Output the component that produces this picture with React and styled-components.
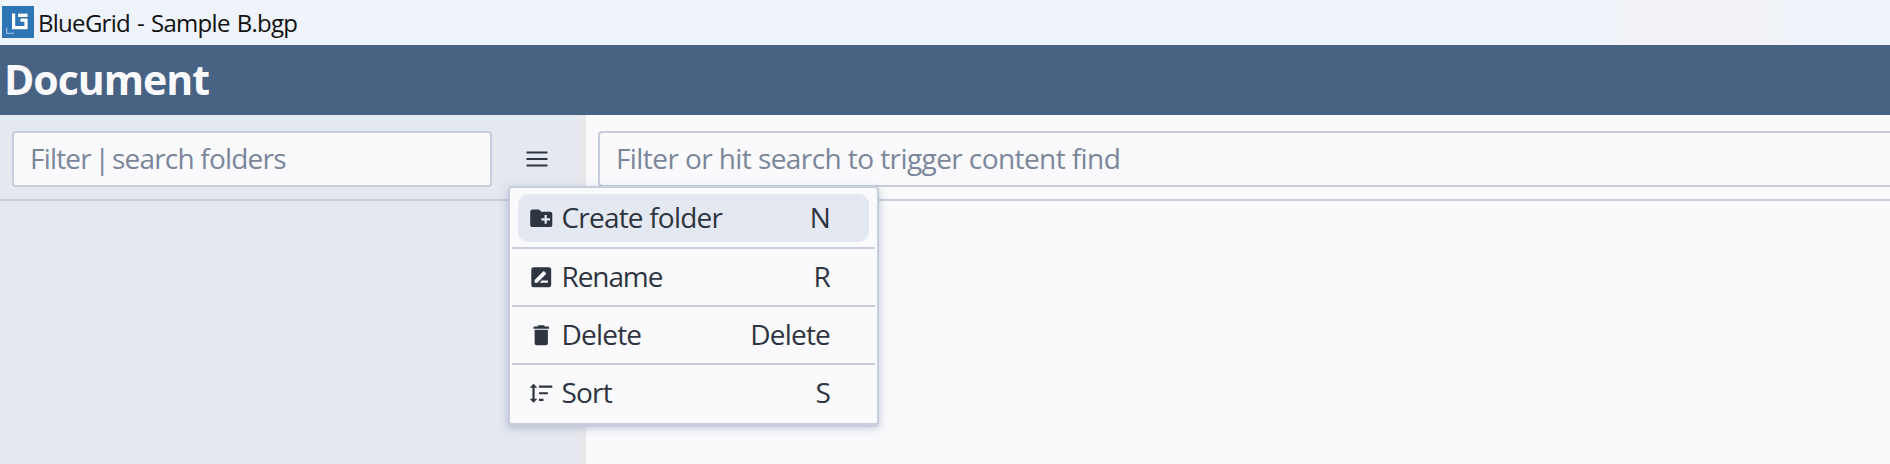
import React from "react";
import styled, { createGlobalStyle } from "styled-components";

const Global = createGlobalStyle`
  * { box-sizing: border-box; }
  body { margin: 0; overflow: hidden; font-family: "Open Sans", "Noto Sans", sans-serif; color: #2e3440; }
`;
const Window = styled.div`
  display: flex;
  flex-direction: column;
  height: 464px;
  background: #fafafc;
`;
const TitleBar = styled.div`
  display: flex;
  align-items: center;
  flex: 0 0 45px;
  padding: 0 0 0 2px;
  gap: 4px;
  background: linear-gradient(90deg, #eff3fb 0 1590px, #f0f2f7 1625px 1765px, #eff3fb 1850px);
  svg { display: block; margin-top: -1px; }
`;
const Fit = styled.span`
  display: inline-block;
  white-space: pre;
  font-size: ${(p) => p.$size}px;
  line-height: 36px;
  letter-spacing: ${(p) => p.$track || 0}px;
  word-spacing: ${(p) => p.$word || 0}px;
  padding-bottom: 2px;
`;
const Pipe = styled.span`
  margin: 0 -3.5px 0 -3px;
`;
const WindowTitle = styled(Fit)`
  color: #111;
  margin-top: 2px;
`;
const Header = styled.header`
  display: flex;
  align-items: center;
  flex: 0 0 70px;
  padding: 0 0 0 4px;
  background: #486284;
  color: #fafafc;
  font-weight: 700;
`;
const Body = styled.main`
  display: flex;
  flex: 1;
  min-height: 0;
`;
const Sidebar = styled.aside`
  width: 578px;
  flex: none;
  background: #e4e8f0;
`;
const Splitter = styled.div`
  width: 8px;
  flex: none;
  background: #e9e9ec;
`;
const Content = styled.section`
  flex: 1;
  min-width: 0;
`;
const Toolbar = styled.div`
  display: flex;
  align-items: flex-start;
  height: 86px;
  padding: 16px 0 0 12px;
  border-bottom: 2px solid #c8cddb;
`;
const SearchBox = styled.div`
  display: flex;
  align-items: center;
  width: ${(p) => p.$width};
  height: 56px;
  padding-left: 16px;
  border: 2px solid #c8cddb;
  border-right-width: ${(p) => (p.$open ? 0 : 2)}px;
  border-radius: ${(p) => (p.$open ? "4px 0 0 4px" : "4px")};
  background: #fafafc;
  color: #7a869a;
`;
const MenuButton = styled.button`
  display: flex;
  align-items: center;
  justify-content: center;
  width: 56px;
  height: 56px;
  margin-left: 17px;
  padding: 0;
  border: 0;
  background: none;
  color: #2e3440;
`;
const Menu = styled.div`
  position: absolute;
  left: 508px;
  top: 186px;
  width: 371px;
  height: 239px;
  padding: 2px;
  border: 2px solid #c8cddb;
  border-radius: 4px;
  background: #fafafc;
  box-shadow: 0 2px 1px #c8cddb, 0 3px 10px rgba(110, 128, 165, 0.42);
`;
const Divider = styled.div`
  height: 2px;
  background: #c8cddb;
`;
const Item = styled.div`
  display: flex;
  align-items: center;
  height: 48px;
  margin: 4px 6px ${(p) => (p.$active ? 5 : 4)}px;
  padding: 0 39px 0 10px;
  border-radius: 10px;
  background: ${(p) => (p.$active ? "#e4e8f0" : "transparent")};
  svg { display: block; flex: none; }
`;
const Label = styled(Fit)`
  margin-left: 7px;
  flex: 1;
`;

const icons = {
  folder: "M10,4L12,6H20A2,2 0 0,1 22,8V18A2,2 0 0,1 20,20H4C2.89,20 2,19.1 2,18V6C2,4.89 2.89,4 4,4H10M15,9V12H12V14H15V17H17V14H20V12H17V9H15Z",
  rename: "M18,17H10.5L12.5,15H18M6,17V14.5L13.88,6.65C14.07,6.45 14.39,6.45 14.59,6.65L16.35,8.41C16.55,8.61 16.55,8.92 16.35,9.12L8.47,17M19,3H5C3.89,3 3,3.89 3,5V19A2,2 0 0,0 5,21H19A2,2 0 0,0 21,19V5C21,3.89 20.1,3 19,3Z",
  trash: "M19,4H15.5L14.5,3H9.5L8.5,4H5V6H19M6,19A2,2 0 0,0 8,21H16A2,2 0 0,0 18,19V7H6V19Z",
  sort: "M10,13V11H18V13H10M10,19V17H14V19H10M10,7V5H22V7H10M6,17H8.5L5,20.5L1.5,17H4V7H1.5L5,3.5L8.5,7H6V17Z",
};
const Icon = ({ name }) => (
  <svg width="26.5" height="26.5" viewBox="0 0 24 24" fill="#2e3440"><path d={icons[name]} /></svg>
);
const items = [
  { icon: "folder", label: "Create folder", keys: "N", track: -0.8, active: true },
  { icon: "rename", label: "Rename", keys: "R", track: -1.1 },
  { icon: "trash", label: "Delete", keys: "Delete", track: -0.8 },
  { icon: "sort", label: "Sort", keys: "S", track: -0.8 },
];

export default function App() {
  return (
    <Window>
      <Global />
      <TitleBar>
        <svg width="32" height="32" viewBox="0 0 32 32">
          <rect width="32" height="32" fill="#2e75b6" />
          <path d="M11.6 7.5V21.6H24V14.2H18.5" fill="none" stroke="#fff" strokeWidth="3.2" />
          <path d="M16 9.3H25.6" stroke="#fff" strokeWidth="3.4" />
          <path d="M4.7 21.5V27.3H12" fill="none" stroke="#8db5da" strokeWidth="1.3" />
        </svg>
        <WindowTitle $size={24} $track={-0.72} $word={1.5}>BlueGrid - Sample B.bgp</WindowTitle>
      </TitleBar>
      <Header><Fit $size={41} $track={-1}>Document</Fit></Header>
      <Body>
        <Sidebar>
          <Toolbar>
            <SearchBox $width="480px">
              <Fit $size={28} $track={-0.8}>Filter <Pipe>|</Pipe> search folders</Fit>
            </SearchBox>
            <MenuButton aria-label="Folder menu">
              <svg width="22" height="18" viewBox="0 0 22 18"><path d="M0.5 2.5H21.5M0.5 9H21.5M0.5 15.5H21.5" stroke="currentColor" strokeWidth="2" /></svg>
            </MenuButton>
          </Toolbar>
        </Sidebar>
        <Splitter />
        <Content>
          <Toolbar>
            <SearchBox $width="100%" $open><Fit $size={28} $track={-0.58}>Filter or hit search to trigger content find</Fit></SearchBox>
          </Toolbar>
        </Content>
      </Body>
      <Menu>
        {items.map((it, i) => (
          <React.Fragment key={it.label}>
            {i > 0 && <Divider />}
            <Item $active={it.active}>
              <Icon name={it.icon} />
              <Label $size={28} $track={it.track}>{it.label}</Label>
              <Fit $size={28} $track={-0.8}>{it.keys}</Fit>
            </Item>
          </React.Fragment>
        ))}
      </Menu>
    </Window>
  );
}
